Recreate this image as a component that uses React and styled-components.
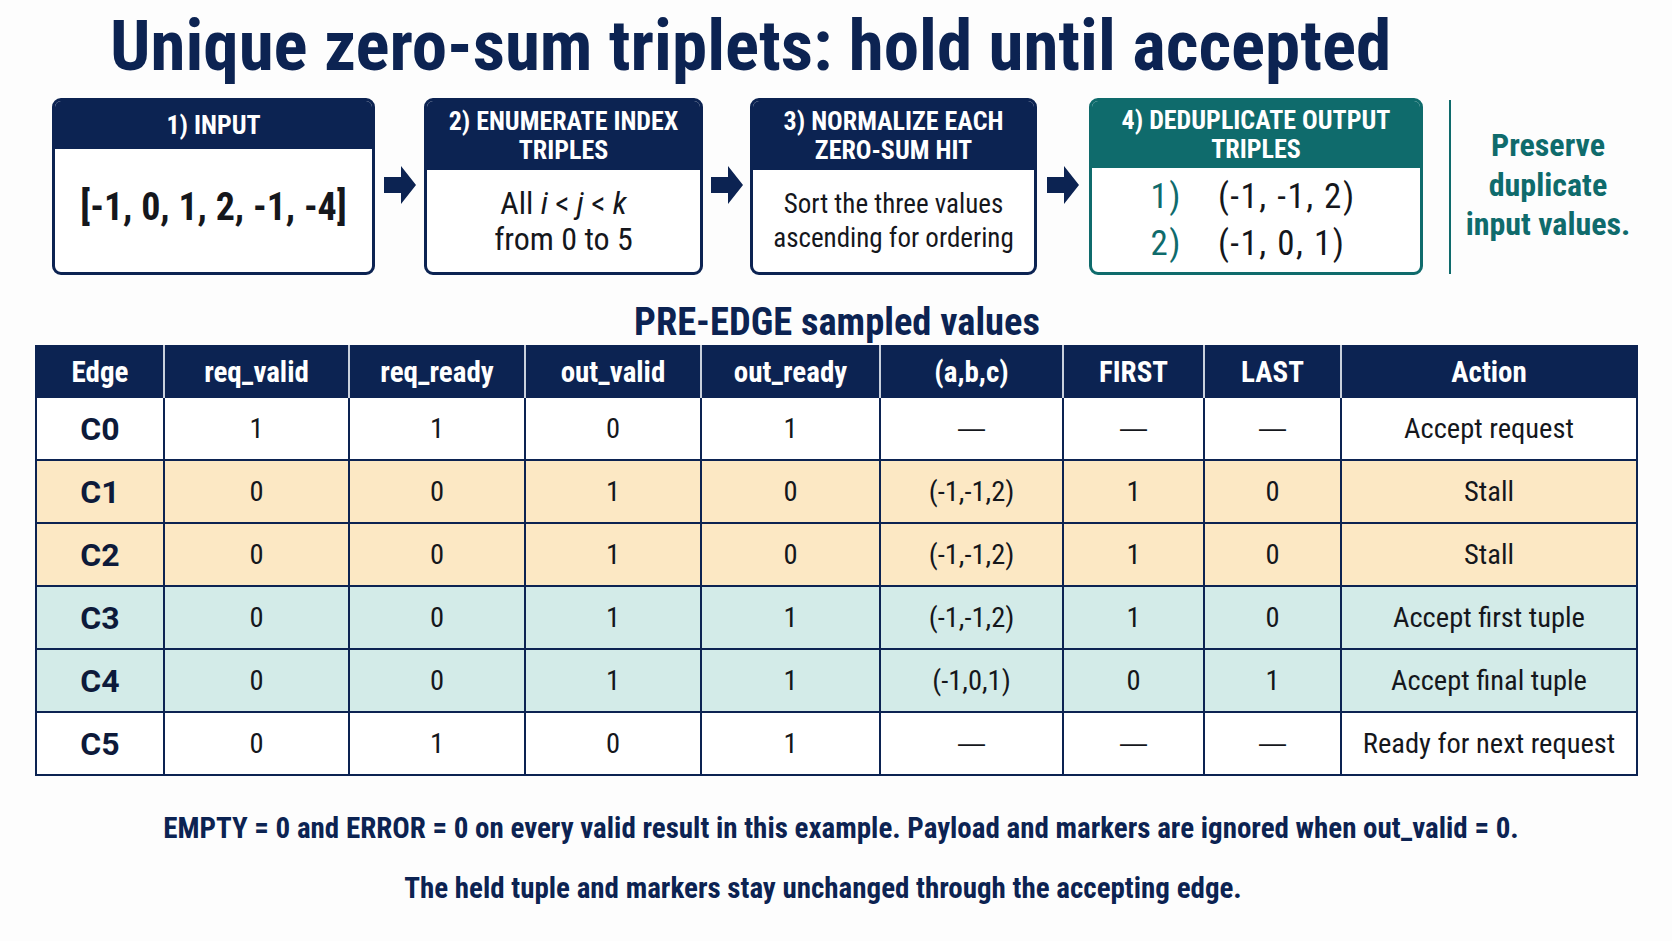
import React from "react";
import styled, { createGlobalStyle } from "styled-components";

const NAVY = "#0c2352";
const TEAL = "#0f6b6c";
const INK = "#15171c";

const GlobalStyle = createGlobalStyle`
  html, body {
    margin: 0;
    padding: 0;
    background: #fdfdfd;
  }
  body {
    font-family: "Roboto Condensed", Roboto, "Liberation Sans", sans-serif;
  }
`;

const Page = styled.div`
  width: 1672px;
  height: 941px;
  box-sizing: border-box;
  overflow: hidden;
  display: flex;
  flex-direction: column;
  color: ${NAVY};
`;

const Title = styled.h1`
  margin: 6px 0 0 110px;
  font-size: 71px;
  line-height: 80px;
  font-weight: 700;
  white-space: nowrap;
`;

const StepsRow = styled.div`
  display: flex;
  align-items: center;
  margin: 12px 0 0 52px;
  height: 177px;
`;

const StepBox = styled.div`
  width: ${(p) => p.w}px;
  height: 100%;
  box-sizing: border-box;
  border: 3px solid ${(p) => (p.teal ? TEAL : NAVY)};
  border-radius: 9px;
  overflow: hidden;
  display: flex;
  flex-direction: column;
  background: #fff;
`;

const StepHead = styled.div`
  height: ${(p) => p.h}px;
  flex: none;
  background: ${(p) => (p.teal ? TEAL : NAVY)};
  color: #fff;
  font-weight: 700;
  font-size: 26px;
  line-height: 29px;
  text-align: center;
  display: flex;
  align-items: center;
  justify-content: center;
  padding: 0 6px;
`;

const StepBody = styled.div`
  flex: 1;
  display: flex;
  flex-direction: column;
  align-items: center;
  justify-content: center;
  text-align: center;
  color: ${INK};
  font-size: ${(p) => p.size || 30}px;
  line-height: ${(p) => p.lh || 36}px;
  font-weight: ${(p) => (p.bold ? 700 : 400)};
  padding-bottom: ${(p) => p.pb || 0}px;
`;

const ArrowSlot = styled.div`
  width: ${(p) => p.w}px;
  flex: none;
  display: flex;
  align-items: center;
  justify-content: center;
  padding-bottom: 4px;
`;

const OutList = styled.div`
  display: grid;
  grid-template-columns: auto auto;
  column-gap: 36px;
  row-gap: 11px;
  font-size: 35px;
  line-height: 36px;
  letter-spacing: 1.5px;
  text-align: left;
  padding-right: 6px;
`;

const OutNum = styled.span`
  color: ${TEAL};
`;

const OutTuple = styled.span`
  color: ${INK};
`;

const Divider = styled.div`
  width: 2px;
  height: 174px;
  background: ${TEAL};
  margin-left: 26px;
`;

const SideNote = styled.div`
  width: 194px;
  text-align: center;
  color: ${TEAL};
  font-weight: 700;
  font-size: 32px;
  line-height: 39.5px;
  padding-bottom: 2px;
`;

const Subtitle = styled.h2`
  margin: 27px 0 0 0;
  text-align: center;
  padding-left: 2px;
  font-size: 38.5px;
  line-height: 40px;
  font-weight: 700;
`;

const Table = styled.table`
  margin: 3px 0 0 35px;
  width: 1601px;
  border-collapse: collapse;
  table-layout: fixed;
  border: 2px solid ${NAVY};
`;

const HeadCell = styled.th`
  height: 49px;
  padding: 0;
  background: ${NAVY};
  color: #fff;
  font-weight: 700;
  font-size: 29px;
  text-align: center;
  border-left: 2px solid #c9d0dc;
  &:first-child {
    border-left: none;
  }
`;

const Row = styled.tr`
  background: ${(p) =>
    p.tone === "warm" ? "#fce8c4" : p.tone === "cool" ? "#d3ebe8" : "#ffffff"};
`;

const Cell = styled.td`
  height: 61px;
  padding: 0;
  text-align: center;
  font-size: 28.5px;
  color: ${INK};
  border: 2px solid ${NAVY};
`;

const EdgeCell = styled(Cell)`
  font-family: Roboto, "Liberation Sans", sans-serif;
  font-size: 32px;
  font-weight: 700;
  color: #0d1a3a;
`;

const DashCell = styled(Cell)`
  font-family: "Liberation Sans", Arial, sans-serif;
  font-size: 27px;
`;

const Footer = styled.p`
  margin: ${(p) => p.top}px 0 0 0;
  text-align: center;
  font-size: 29px;
  line-height: 34px;
  font-weight: 700;
  padding-left: ${(p) => p.left || 0}px;
  padding-right: ${(p) => p.right || 0}px;
`;

const Arrow = () => (
  <svg width="32" height="38" viewBox="0 0 32 38">
    <path d="M0 11 H17 V0 L32 19 L17 38 V27 H0 Z" fill={NAVY} />
  </svg>
);

const cols = [128, 185, 176, 176, 179, 183, 141, 137, 296];
const heads = [
  "Edge",
  "req_valid",
  "req_ready",
  "out_valid",
  "out_ready",
  "(a,b,c)",
  "FIRST",
  "LAST",
  "Action",
];

const D = "\u2014";
const rows = [
  { tone: "plain", cells: ["C0", "1", "1", "0", "1", D, D, D, "Accept request"] },
  { tone: "warm", cells: ["C1", "0", "0", "1", "0", "(-1,-1,2)", "1", "0", "Stall"] },
  { tone: "warm", cells: ["C2", "0", "0", "1", "0", "(-1,-1,2)", "1", "0", "Stall"] },
  { tone: "cool", cells: ["C3", "0", "0", "1", "1", "(-1,-1,2)", "1", "0", "Accept first tuple"] },
  { tone: "cool", cells: ["C4", "0", "0", "1", "1", "(-1,0,1)", "0", "1", "Accept final tuple"] },
  { tone: "plain", cells: ["C5", "0", "1", "0", "1", D, D, D, "Ready for next request"] },
];

const renderCell = (c, i) => {
  if (i === 0) return <EdgeCell key={i}>{c}</EdgeCell>;
  if (c === D) return <DashCell key={i}>{c}</DashCell>;
  return <Cell key={i}>{c}</Cell>;
};

const App = () => {
  return (
    <Page>
      <GlobalStyle />
      <Title>Unique zero-sum triplets: hold until accepted</Title>

      <StepsRow>
        <StepBox w={323}>
          <StepHead h={48}>1) INPUT</StepHead>
          <StepBody size={38} bold pb={8}>
            [-1, 0, 1, 2, -1, -4]
          </StepBody>
        </StepBox>
        <ArrowSlot w={49}>
          <Arrow />
        </ArrowSlot>
        <StepBox w={279}>
          <StepHead h={69}>
            2) ENUMERATE INDEX
            <br />
            TRIPLES
          </StepHead>
          <StepBody size={32}>
            <div>
              All <i>i</i> &lt; <i>j</i> &lt; <i>k</i>
            </div>
            <div>from 0 to 5</div>
          </StepBody>
        </StepBox>
        <ArrowSlot w={47}>
          <Arrow />
        </ArrowSlot>
        <StepBox w={287}>
          <StepHead h={69}>
            3) NORMALIZE EACH
            <br />
            ZERO-SUM HIT
          </StepHead>
          <StepBody size={27} lh={34}>
            <div>Sort the three values</div>
            <div>ascending for ordering</div>
          </StepBody>
        </StepBox>
        <ArrowSlot w={52}>
          <Arrow />
        </ArrowSlot>
        <StepBox w={334} teal>
          <StepHead h={67} teal>
            4) DEDUPLICATE OUTPUT
            <br />
            TRIPLES
          </StepHead>
          <StepBody>
            <OutList>
              <OutNum>1)</OutNum>
              <OutTuple>(-1, -1, 2)</OutTuple>
              <OutNum>2)</OutNum>
              <OutTuple>(-1, 0, 1)</OutTuple>
            </OutList>
          </StepBody>
        </StepBox>
        <Divider />
        <SideNote>
          Preserve
          <br />
          duplicate
          <br />
          input values.
        </SideNote>
      </StepsRow>

      <Subtitle>PRE-EDGE sampled values</Subtitle>

      <Table>
        <colgroup>
          {cols.map((w, i) => (
            <col key={i} style={{ width: w }} />
          ))}
        </colgroup>
        <thead>
          <tr>
            {heads.map((h) => (
              <HeadCell key={h}>{h}</HeadCell>
            ))}
          </tr>
        </thead>
        <tbody>
          {rows.map((r) => (
            <Row key={r.cells[0]} tone={r.tone}>
              {r.cells.map(renderCell)}
            </Row>
          ))}
        </tbody>
      </Table>

      <Footer top={35} left={10}>
        EMPTY = 0 and ERROR = 0 on every valid result in this example. Payload
        and markers are ignored when out_valid = 0.
      </Footer>
      <Footer top={26} right={26}>
        The held tuple and markers stay unchanged through the accepting edge.
      </Footer>
    </Page>
  );
};

export default App;
